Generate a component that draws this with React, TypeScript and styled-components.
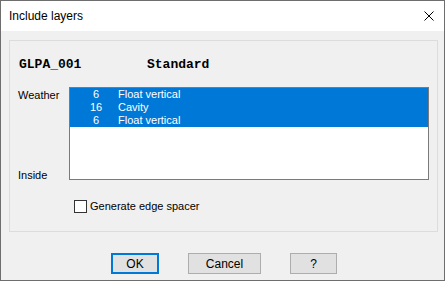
import styled, { createGlobalStyle } from "styled-components";

const GlobalStyle = createGlobalStyle`
  html, body {
    margin: 0;
    padding: 0;
    background: #ffffff;
  }
  body {
    font-family: "Liberation Sans", Arial, sans-serif;
    color: #000000;
  }
`;

const layers = [
  { thickness: 6, name: "Float vertical" },
  { thickness: 16, name: "Cavity" },
  { thickness: 6, name: "Float vertical" },
];

const App = () => {
  return (
    <>
      <GlobalStyle />
      <Window>
        <TitleBar>
          <Title>Include layers</Title>
          <CloseIcon width="10" height="10" viewBox="0 0 10 10">
            <path d="M0.5 0.5 L9.5 9.5 M9.5 0.5 L0.5 9.5" stroke="#000" strokeWidth="1" fill="none" />
          </CloseIcon>
        </TitleBar>
        <Content>
          <Panel>
            <Header>
              <span>GLPA_001</span>
              <span>Standard</span>
            </Header>
            <LayerRow>
              <Labels>
                <Label>Weather</Label>
                <Label>Inside</Label>
              </Labels>
              <ListBox>
                {layers.map((layer, idx) => (
                  <ListItem key={idx} $selected>
                    <Thickness>{layer.thickness}</Thickness>
                    <span>{layer.name}</span>
                  </ListItem>
                ))}
              </ListBox>
            </LayerRow>
            <CheckRow>
              <CheckBox />
              <Label>Generate edge spacer</Label>
            </CheckRow>
          </Panel>
          <Footer>
            <Button $default $width={48}>OK</Button>
            <Button $width={73}>Cancel</Button>
            <Button $width={47}>?</Button>
          </Footer>
        </Content>
      </Window>
    </>
  );
};

const Window = styled.div`
  width: 445px;
  height: 281px;
  box-sizing: border-box;
  border: 1px solid #6e6e6e;
  background: #f0f0f0;
  display: flex;
  flex-direction: column;
  overflow: hidden;
`;

const TitleBar = styled.div`
  height: 30px;
  flex: none;
  background: #ffffff;
  display: flex;
  align-items: center;
  justify-content: space-between;
  padding: 0 10px 0 8px;
`;

const Title = styled.div`
  font-size: 12px;
  line-height: 14px;
`;

const CloseIcon = styled.svg`
  display: block;
`;

const Content = styled.div`
  padding: 9px 0 0 8px;
`;

const Panel = styled.div`
  width: 429px;
  height: 192px;
  box-sizing: border-box;
  border: 1px solid #dcdcdc;
  padding: 16px 0 0 0;
`;

const Header = styled.div`
  display: grid;
  grid-template-columns: 128px auto;
  padding-left: 9px;
  font-family: "Liberation Mono", "Courier New", monospace;
  font-weight: bold;
  font-size: 13px;
  line-height: 15px;
`;

const LayerRow = styled.div`
  display: grid;
  grid-template-columns: 51px 360px;
  margin: 15px 0 0 8px;
`;

const Labels = styled.div`
  display: flex;
  flex-direction: column;
  justify-content: space-between;
  padding-top: 2px;
  margin-bottom: -2px;
`;

const Label = styled.span`
  font-size: 11px;
  line-height: 13px;
`;

const ListBox = styled.div`
  height: 93px;
  box-sizing: border-box;
  border: 1px solid #7a7a7a;
  background: #ffffff;
`;

const ListItem = styled.div<{ $selected?: boolean }>`
  display: grid;
  grid-template-columns: 44px 1fr;
  padding-left: 4px;
  height: 13px;
  font-size: 11px;
  line-height: 13px;
  background: ${(p) => (p.$selected ? "#0078d7" : "transparent")};
  color: ${(p) => (p.$selected ? "#ffffff" : "#000000")};
`;

const Thickness = styled.span`
  text-align: center;
`;

const CheckRow = styled.div`
  display: flex;
  align-items: center;
  gap: 3px;
  margin: 20px 0 0 64px;
`;

const CheckBox = styled.div`
  width: 13px;
  height: 13px;
  box-sizing: border-box;
  border: 1px solid #333333;
  background: #ffffff;
`;

const Footer = styled.div`
  display: flex;
  gap: 29px;
  margin: 21px 0 0 102px;
`;

const Button = styled.button<{ $default?: boolean; $width: number }>`
  width: ${(p) => p.$width}px;
  height: 21px;
  box-sizing: border-box;
  padding: 0;
  background: #e1e1e1;
  border: ${(p) => (p.$default ? "2px solid #0078d7" : "1px solid #adadad")};
  font-family: "Liberation Sans", Arial, sans-serif;
  font-size: 12px;
  color: #000000;
`;

export default App;
